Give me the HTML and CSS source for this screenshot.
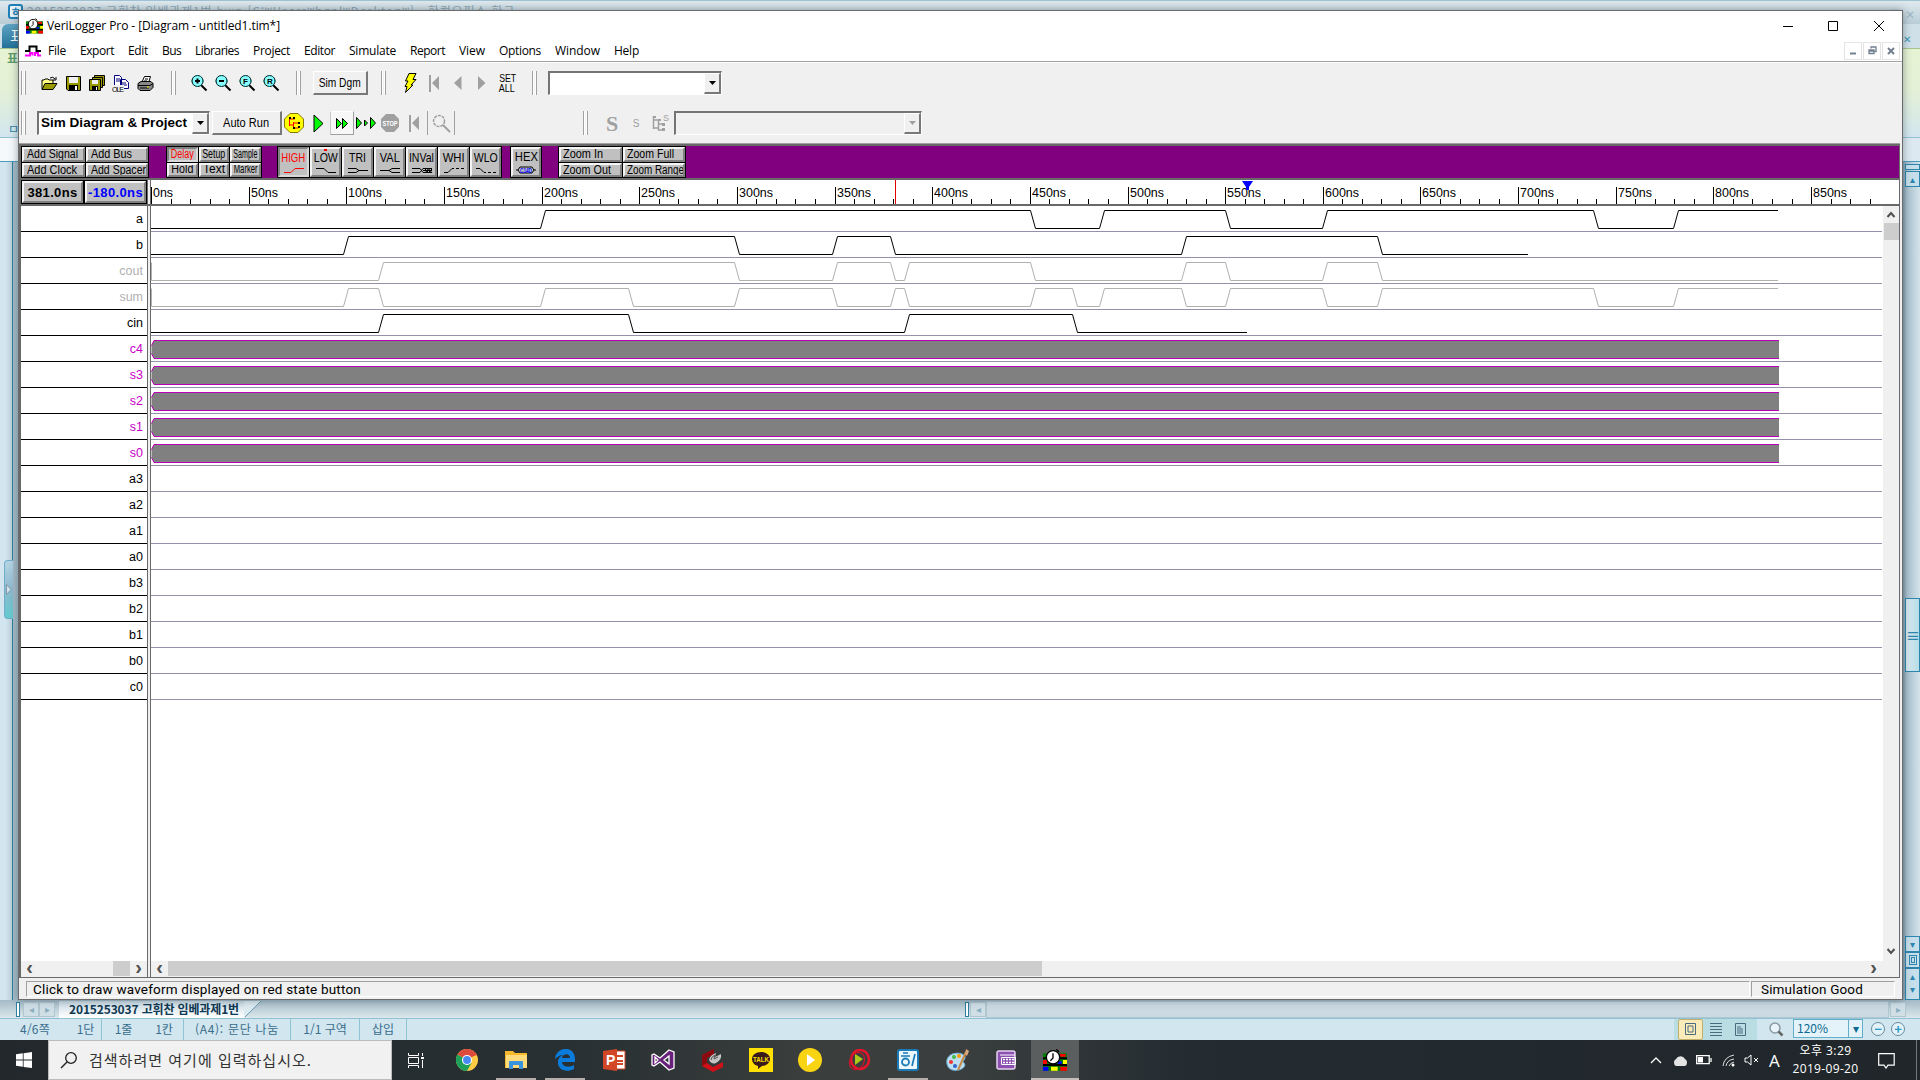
FILE: index.html
```html
<!DOCTYPE html>
<html lang="ko">
<head>
<meta charset="utf-8">
<title>VeriLogger Pro</title>
<link rel="stylesheet" href="styles.css">
</head>
<body>
<svg width="0" height="0" class="defs">
  <symbol id="veri" viewBox="0 0 18 16"><path fill="#008000" d="M0 3h18v13H0z"/><path fill="#000" d="M0 6h18v1.500H0zM0 11h18v1.500H0z"/><path fill="#f00" d="M12 3.500h5v2h-5zM0 8h3v3H0zM13 13h5v3h-5z"/><path fill="#ff0" d="M15 8h3v3h-3zM6 13h5v3H6z"/><path fill="#00f" d="M0 13h4v3H0zM11 9h3v2h-3z"/><circle cx="7.500" cy="6" r="5" fill="#fff" stroke="#000"/><path d="M7.500 3v3.500l-2 2M10 0l2 2" stroke="#000" fill="none"/></symbol>
  <symbol id="mag" viewBox="0 0 18 18"><path d="M11 11l5.500 5.500" stroke="#000" stroke-width="2"/><circle cx="7.500" cy="7" r="5.500" fill="#8ff" stroke="#000"/><circle cx="7.500" cy="7" r="5.500" fill="none" stroke="#088" stroke-dasharray="2 2"/></symbol>
  <symbol id="first" viewBox="0 0 12 18"><path d="M1 1h2v17H1zM11 2v14L4 9z" fill="#a0a0a0"/></symbol>
  <symbol id="win" viewBox="0 0 16 16"><path fill="#fff" d="M0 2.300L6.800 1.300v6.300H0zM7.600 1.200L16 0v7.600H7.600zM0 8.400h6.800v6.400L0 13.800zM7.600 8.400H16V16l-8.400-1.100z"/></symbol>
</svg>

<main class="desktop">
  <section class="hwp">
    <div class="hwp-title"><span class="hwp-logo">ㅎ</span><span class="hwp-name" data-w="488">2015253037 고휘찬 임베과제1번.hwp [C:₩Users₩hgnl₩Desktop₩] - 한컴오피스 한글</span><span class="hwp-x">❐&nbsp; ✕</span></div>
    <div class="hwp-tabs"><span class="hwp-tab">표</span><span class="hwp-close">✕</span></div>
    <div class="hwp-ribbon"><b>표</b><i>ㅁ</i></div>
    <div class="hwp-gap"></div>
    <div class="hwp-doc">
      <div class="edge-left"><span class="edge-handle"><svg width="6" height="11"><path d="M.5.500v10L5 5.500z" fill="#d5e4ea" stroke="#7f9aa8"/></svg></span></div>
      <div class="hwp-scroll">
        <span class="sb split"></span><span class="sb">▴</span>
        <span class="sb-thumb">≡</span><span class="sb down">▾</span><span class="sb"><i></i></span><span class="sb tall">▴<br>▾</span>
      </div>
    </div>
    <div class="hwp-sheets"><span class="grab"></span><span class="nav">◂</span><span class="nav">▸</span><div class="sheet"><b data-w="170">2015253037 고휘찬 임베과제1번</b></div><svg class="slope" width="18" height="17"><path d="M0 17L17 0H0z" fill="#dcebf0"/><path d="M1 16L17 0" stroke="#6b9bb0"/></svg><span class="grab mid"></span><span class="nav">◂</span><span class="fill"></span><span class="nav">▸</span></div>
    <div class="hwp-status">
      <span class="w1" data-w="30">4/6쪽</span><span class="w2 line">1단</span><span class="w3">1줄</span><span class="w4 line">1칸</span><span class="w5 line" data-w="84">(A4): 문단 나눔</span><span class="w6 line">1/1 구역</span><span class="w7 line">삽입</span>
      <div class="views"><span class="v on"><svg width="12" height="13"><path d="M.5.500h10v11H.5zM3 3h5v6H3z" fill="none" stroke="#4a6a80"/></svg></span><span class="v"><svg width="12" height="13"><path d="M0 .5h12M0 3.500h12M0 6.500h12M0 9.500h12M0 12.500h12" stroke="#4a6a80"/></svg></span><span class="v"><svg width="11" height="13"><path d="M.5.500h10v12H.5zM2 4h4M2 6h6M2 8h6M2 10h6" fill="none" stroke="#4a6a80"/></svg></span></div>
      <svg class="lens" width="16" height="16"><circle cx="7" cy="7" r="5" fill="#e9f5fb" stroke="#8a9aa5" stroke-width="1.500"/><path d="M10.500 10.500l4 4" stroke="#666" stroke-width="2.500"/></svg>
      <span class="zoombox"><em>120%</em><i>▾</i></span><span class="round">−</span><span class="round">+</span>
    </div>
  </section>

  <section class="app">
    <header class="title"><svg width="17" height="16"><use href="#veri"/></svg><span data-w="233">VeriLogger Pro - [Diagram - untitled1.tim*]</span>
      <svg class="caption" width="102" height="12"><path d="M1 6.500h10M46.500 1.500h9v9h-9zM92 1l10 10M102 1L92 11" fill="none" stroke="#000"/></svg></header>
    <nav class="menu"><svg width="17" height="12"><path d="M0 6h4.500V1.500h7V6H16" stroke="#000" stroke-width="2" fill="none"/><path d="M0 10.500h5V8h2.500v2.500M10 11V8h3v2.500h3" stroke="#f0f" stroke-width="2" fill="none"/></svg>
      <div class="items"><span data-w="18">File</span><span data-w="34">Export</span><span data-w="20">Edit</span><span data-w="19">Bus</span><span data-w="44">Libraries</span><span data-w="37">Project</span><span data-w="31">Editor</span><span data-w="47">Simulate</span><span data-w="35">Report</span><span data-w="26">View</span><span data-w="42">Options</span><span data-w="45">Window</span><span data-w="25">Help</span></div>
      <div class="mdi-btns"><span><svg width="8" height="9"><path d="M1 7.500h6" stroke="#728090" stroke-width="2"/></svg></span><span><svg width="9" height="9"><path d="M3 2.500V1h5v4.500H6.500M1 4h5v3.500H1zM1 5h5" fill="none" stroke="#728090" stroke-width="1.300"/></svg></span><span><svg width="8" height="8"><path d="M1 1l6 6M7 1L1 7" stroke="#728090" stroke-width="2"/></svg></span></div></nav>

    <div class="toolbars">
      <div class="bar">
        <i class="grip"></i>
        <div class="tools t11">
          <span><svg width="17" height="15"><path d="M1 13V4h2l1-1h3l1 1h4v3" fill="#ff8" stroke="#000"/><path d="M1 13.500L4 7.500h12l-4 6z" fill="#990" stroke="#000"/><path d="M9 2q3-2 5 1m1-2v3h-3" fill="none" stroke="#000"/></svg></span>
          <span><svg width="15" height="15"><path d="M.5.500h14v14H2L.5 13z" fill="#990" stroke="#000"/><path d="M3 1h9v6H3z" fill="#f0f0f0"/><path d="M3 9h9v6H3z" fill="#000"/><path d="M9 10h2v4H9z" fill="#fff"/></svg></span>
          <span><svg width="16" height="16"><path d="M5.500.500h10v10h-10z" fill="#990" stroke="#000"/><path d="M3.500 2.500h10v10h-10z" fill="#990" stroke="#000"/><path d="M.5 4.500h11v11H.5z" fill="#990" stroke="#000"/><path d="M3 5h6v4H3z" fill="#eee"/><path d="M3 11h6v5H3z" fill="#000"/><path d="M7 12h1v3H7z" fill="#fff"/></svg></span>
          <span><svg width="18" height="17"><path d="M2.500.500h5l2 2v8h-7zM8.500 4.500h5l3 3v6h-8z" fill="#fff" stroke="#000080"/><path d="M4 4h4M4 6h4M10 8h4M10 10h5" stroke="#000080"/><path d="M0 10h12v7H0z" fill="#f0f0f0"/><text x="0" y="16.500" font-size="7" textLength="12">OLE</text></svg></span>
          <span><svg width="17" height="15"><path d="M4.500 7l3-6.500h6L11.500 7" fill="#fff" stroke="#000"/><path d="M1 7.500l3-2h10l2 2v4l-3 3H3l-2-2z" fill="#888" stroke="#000"/><path d="M1 9.500h12l3-2M8 3h3M7 5h3M3 12h9" stroke="#000" fill="none"/><path d="M10 11h2" stroke="#ff0"/></svg></span>
        </div>
        <i class="grip g12"></i>
        <div class="tools t11">
          <span><svg width="18" height="18"><use href="#mag"/><path d="M5 7h5M7.500 4.500v5" stroke="#000" stroke-width="2"/></svg></span>
          <span><svg width="18" height="18"><use href="#mag"/><path d="M5 7h5" stroke="#000" stroke-width="2"/></svg></span>
          <span><svg width="18" height="18"><use href="#mag"/><text x="5" y="10" font-size="8" font-weight="bold">F</text></svg></span>
          <span><svg width="18" height="18"><use href="#mag"/><text x="5" y="10" font-size="8" font-weight="bold">R</text></svg></span>
        </div>
        <i class="grip g13"></i>
        <button class="raised simdgm"><em data-w="42">Sim Dgm</em></button>
        <i class="grip g13"></i>
        <div class="tools t12">
          <span><svg width="13" height="20"><path d="M5 .5h7l-3 6h3L7 12h2L1.500 19.500l1.500-6H1L4 8H1.500z" fill="#ff0" stroke="#000"/></svg></span>
          <span><svg width="12" height="18"><use href="#first"/></svg></span>
          <span><svg width="8" height="14"><path d="M7.500 0v14L0 7z" fill="#a0a0a0"/></svg></span>
          <span><svg width="8" height="14"><path d="M0 0v14l7.500-7z" fill="#a0a0a0"/></svg></span>
          <span class="setall"><em data-w="17">SET</em><em data-w="16">ALL</em></span>
        </div>
        <i class="grip g14"></i>
        <div class="combo c1"><span></span><i><svg width="7" height="4"><path d="M0 0h7L3.500 4z"/></svg></i></div>
      </div>
      <div class="bar">
        <i class="grip"></i>
        <div class="combo c2"><span><b data-w="146">Sim Diagram &amp; Project</b></span><i><svg width="7" height="4"><path d="M0 0h7L3.500 4z"/></svg></i></div>
        <button class="raised autorun"><em data-w="46">Auto Run</em></button>
        <div class="tools">
          <span><svg width="20" height="20"><path d="M6 .5h8l5.500 5.500v8L14 19.500H6L.5 14V6z" fill="#ff0" stroke="#870"/><path d="M5.500 4v9M5.500 6h5M5.500 12h4M9.500 9v6h5M10 10h5" stroke="#f00" fill="none"/><path d="M9 4h2v2H9zM5 4h2v2H5zM14 9h2v2h-2zM14 13h2v2h-2zM9 14h2v2H9z" fill="#000"/></svg></span>
          <span><svg width="11" height="19"><path d="M1 1v17l9-8.500z" fill="#0f0" stroke="#000"/></svg></span>
          <span class="boxed"><svg width="12" height="11"><path d="M.5.500v10l5-5zM6.500.500v10l5-5z" fill="#0f0" stroke="#000"/></svg></span>
          <span><svg width="21" height="12"><path d="M.5.500v11l5-5.500zM8.500 3v6l3-3zM14.500.500v11l5-5.500z" fill="#0f0" stroke="#000"/></svg></span>
          <span><svg width="18" height="18"><path d="M5 0h8l5 5v8l-5 5H5l-5-5V5z" fill="#a0a0a0"/><text x="1.500" y="11.500" font-size="7" font-weight="bold" fill="#fff" textLength="15" lengthAdjust="spacingAndGlyphs">STOP</text></svg></span>
          <span><svg width="12" height="18"><use href="#first"/></svg></span>
        </div>
        <i class="sep"></i>
        <div class="tools"><span><svg width="19" height="19"><circle cx="7" cy="7" r="5.500" fill="none" stroke="#a0a0a0" stroke-width="1.500" stroke-dasharray="3 1"/><path d="M11 11l7 7" stroke="#a0a0a0" stroke-width="2"/></svg></span></div>
        <i class="sep"></i>
        <i class="grip g21"></i>
        <div class="tools t12"><span class="bigs">S</span><span class="smalls">S</span><span><svg width="17" height="18"><path d="M1.500 2v13M1.500 6h5M1.500 14h5M6.500 6v10h5M7 10h4" stroke="#a0a0a0" fill="none" stroke-width="1.500"/><path d="M1 2h3v2H1zM6 5h3v2H6zM10 9h3v3h-3zM10 14h3v3h-3z" fill="#a0a0a0"/><text x="11" y="7" font-size="9" fill="#a0a0a0">S</text></svg></span></div>
        <div class="combo c3"><span></span><i><svg width="7" height="4"><path d="M0 0h7L3.500 4z" fill="#a0a0a0"/></svg></i></div>
      </div>
    </div>

    <div class="mdi">
      <div class="strip">
        <div class="grid two"><button><em data-w="51">Add Signal</em></button><button><em data-w="41">Add Bus</em></button><button><em data-w="50">Add Clock</em></button><button><em data-w="55">Add Spacer</em></button></div>
        <div class="grid three"><button class="red down"><em data-w="23">Delay</em></button><button><em data-w="23">Setup</em></button><button><em data-w="24">Sample</em></button><button><em data-w="22">Hold</em></button><button><em data-w="22">Text</em></button><button><em data-w="24">Marker</em></button></div>
        <div class="grid states">
          <button class="red down"><em data-w="24">HIGH</em><svg width="22" height="7"><path d="M1 5.500h7l4-4h9"/></svg></button>
          <button class="mark"><em data-w="24">LOW</em><svg width="22" height="7"><path d="M1 1.500h8l4 4h8"/></svg></button>
          <button><em data-w="17">TRI</em><svg width="22" height="7"><path d="M1 1.500h8l3 2h9M1 5.500h8l3-2"/></svg></button>
          <button><em data-w="20">VAL</em><svg width="22" height="7"><path d="M1 3.500h9l3-2h8M10 3.500l3 2h8"/></svg></button>
          <button><em data-w="25">INVal</em><svg width="22" height="7"><path d="M1 1.500h8l3 4h9M1 5.500h8l3-4h9M12 3.500h9M13 1l5 5M17 1l4 5M18 1l-4 5M21 2l-4 4"/></svg></button>
          <button><em data-w="22">WHI</em><svg width="22" height="7"><path d="M1 5.500h4l4-4h2M13 1.500h3M18 1.500h3"/></svg></button>
          <button><em data-w="24">WLO</em><svg width="22" height="7"><path d="M1 1.500h4l4 4h2M13 5.500h3M18 5.500h3"/></svg></button>
        </div>
        <div class="grid hex"><button><em data-w="23">HEX</em><svg width="22" height="8"><path d="M1 4h2l2-3h12l2 3h2M3 4l2 3h12l2-3"/><text x="5" y="6.500" font-size="6.500" font-weight="bold" fill="#00f" textLength="12" lengthAdjust="spacingAndGlyphs">C14D</text></svg></button></div>
        <div class="grid two zooms"><button><em data-w="40">Zoom In</em></button><button><em data-w="47">Zoom Full</em></button><button><em data-w="48">Zoom Out</em></button><button><em data-w="57">Zoom Range</em></button></div>
      </div>
      <div class="timebar">
        <div class="times"><button><b data-w="50">381.0ns</b></button><button class="blue"><b data-w="55">-180.0ns</b></button></div>
        <i class="splitter"></i>
        <svg id="ruler" width="1748" height="24"></svg>
      </div>
      <div class="panes">
        <div class="left"><div id="names"></div><div class="hscroll"><i class="arr">‹</i><i class="thumb"></i><i class="arr">›</i></div></div>
        <i class="splitter"></i>
        <div class="right">
          <div class="wavearea"><svg id="waves" width="1731" height="755"></svg>
            <div class="vscroll"><svg width="10" height="7"><path d="M1.500 6L5 2l3.500 4" /></svg><i class="vthumb"></i><svg class="dn" width="10" height="7"><path d="M1.500 1L5 5l3.500-4"/></svg></div></div>
          <div class="hscroll"><i class="arr">‹</i><i class="thumb"></i><i class="arr">›</i></div>
        </div>
      </div>
    </div>
    <footer class="status"><div class="s1"><span data-w="328">Click to draw waveform displayed on red state button</span></div><div class="s2"><span data-w="102">Simulation Good</span></div></footer>
  </section>
</main>

<footer class="taskbar">
  <span class="start"><svg width="16" height="16"><use href="#win"/></svg></span>
  <div class="search"><svg width="18" height="18"><circle cx="11" cy="7" r="5.300" fill="none" stroke="#222" stroke-width="1.300"/><path d="M7 11l-6 6" stroke="#222" stroke-width="1.500"/></svg><span data-w="223">검색하려면 여기에 입력하십시오.</span></div>
  <div class="apps">
    <span class="tv"><svg width="17" height="15"><path d="M.5 0v2.500h10V0M.5 15v-2.500h10V15M.5 4.500h10v6H.5zM14.500 0v3M14.500 7v8" fill="none" stroke="#fff"/><path d="M13 4h3v2h-3z" fill="#fff"/></svg></span>
    <span><svg width="22" height="22" viewBox="0 0 24 24"><circle cx="12" cy="12" r="12" fill="#fc4"/><path d="M12 12L1.600 6A12 12 0 0 1 22.400 6z" fill="#dd4b3e"/><path d="M12 12L1.600 6A12 12 0 0 0 12 24l5-9z" fill="#1fa05a"/><path d="M12 6h10.400" stroke="#dd4b3e" stroke-width="2"/><circle cx="12" cy="12" r="5.500" fill="#fff"/><circle cx="12" cy="12" r="4.300" fill="#4889f4"/></svg></span>
    <span class="open"><svg width="22" height="18"><path d="M0 0h8l2 2h12v15H0z" fill="#f7b92c"/><path d="M1 4h21v13H1z" fill="#fedb7b"/><path d="M4 18v-7q0-1 1-1h12q1 0 1 1v7h-4v-4H8v4z" fill="#3a93dc"/></svg></span>
    <span class="open"><svg width="21" height="22" viewBox="0 0 21 22"><path d="M0 10C1-3 20-4 20 10v3H7c0 5 8 6 12 3v4C11 24 2 21 3 12c0-3 3-5 5-6Q4 6 0 10zM7 9h8c0-5-7-5-8 0z" fill="#0b7bdb"/></svg></span>
    <span><svg width="23" height="22"><path d="M10 2h12v18H10z" fill="#fff" stroke="#d24726"/><path d="M14 7h6M14 12h6M14 15h6" stroke="#d24726" stroke-width="2"/><path d="M0 2l14-2v22L0 20z" fill="#d24726"/><text x="3" y="16" font-size="14" font-weight="bold" fill="#fff">P</text></svg></span>
    <span><svg width="24" height="22"><path d="M18 1l5 2v16l-5 2-9-8-6 4-2-1V6l2-1 6 4zM4 8v6l3-3zM18 7l-5 4 5 4z" fill="#68217a" stroke="#fff" stroke-width="1.300" fill-rule="evenodd"/></svg></span>
    <span><svg width="23" height="23"><path d="M13 0L1 6v11l11 6 10-5v-5l-10 5-6-4V9l7-4z" fill="#d01018"/><path d="M13 0L1 6v11l5-3V9l7-4z" fill="#8a0a10"/><path d="M8 11q1-5 7-7l-1 4 6-3q1 6-5 9-4 2-7-3z" fill="#c4c4c4"/><path d="M10 11q0-3 4-5l-1 4 4-2" stroke="#555" fill="none"/></svg></span>
    <span><svg width="24" height="24"><path d="M0 0h24v24H0z" fill="#ffe000"/><path d="M12 4c5 0 9 3 9 7s-4 7-8 7l-4 3v-3c-4-1-6-4-6-7 0-4 4-7 9-7z" fill="#391b1b"/><text x="4" y="14" font-size="7.500" font-weight="bold" fill="#ffe000" textLength="16" lengthAdjust="spacingAndGlyphs">TALK</text></svg></span>
    <span><svg width="24" height="24"><circle cx="12" cy="12" r="12" fill="#f8d412"/><path d="M9 6v12l8-6z" fill="#fff"/></svg></span>
    <span><svg width="23" height="22"><ellipse cx="12" cy="10.500" rx="9" ry="9.500" fill="none" stroke="#e8142c" stroke-width="2.500"/><ellipse cx="9" cy="12" rx="7" ry="9" fill="none" stroke="#c8142c" stroke-width="1.300" transform="rotate(30 9 12)"/><path d="M7 5v11l8-6z" fill="#b0c81a"/></svg></span>
    <span class="open"><svg width="22" height="22"><rect x="1" y="1" width="20" height="20" rx="2" fill="#eaf7fd" stroke="#1b7ab8" stroke-width="2"/><path d="M6 4h5M4 7h9M18 5l-3 12" stroke="#1b7ab8" stroke-width="1.700"/><circle cx="8.500" cy="13" r="3.500" fill="none" stroke="#1b7ab8" stroke-width="1.800"/></svg></span>
    <span><svg width="23" height="23"><path d="M1 15C-1 7 8 2 16 5q5 2 2 6c-3 3 3 3 0 7s-15 6-17-3z" fill="#bcdff2" stroke="#6bb0d6"/><circle cx="5" cy="13" r="2" fill="#e33"/><circle cx="8" cy="8" r="2" fill="#4b4"/><circle cx="13" cy="7" r="2" fill="#f90"/><circle cx="9" cy="17" r="2" fill="#36c"/><path d="M12 21L20 3" stroke="#c88b4a" stroke-width="2"/><path d="M19 5l1-5 3 2-2 5z" fill="#d9a87c"/></svg></span>
    <span><svg width="20" height="20"><rect x="1" y="1" width="18" height="18" rx="2" fill="#8b50b0" stroke="#e6d3f2" stroke-width="1.500"/><path d="M4 5h15" stroke="#fff"/><path d="M5.500 7.500h14v7h-14z" fill="none" stroke="#fff"/><path d="M7 9.500h11M7 12.500h11" stroke="#fff" stroke-width="1.300" stroke-dasharray="2 1"/></svg></span>
    <span class="open active"><svg width="24" height="22"><use href="#veri"/></svg></span>
  </div>
  <div class="tray">
    <svg class="i1" width="12" height="7"><path d="M1 6l5-5 5 5" fill="none" stroke="#fff" stroke-width="1.300"/></svg>
    <svg class="i2" width="17" height="11"><path d="M4 11a4 4 0 0 1 0-7 5 5 0 0 1 9 0 4 4 0 0 1 0 7z" fill="#e4e4e4"/></svg>
    <svg class="i3" width="16" height="10"><path d="M.7.700h12.500v8H.7zM15 3v4" fill="none" stroke="#fff" stroke-width="1.300"/><path d="M2 2h5v5.500H2z" fill="#fff"/></svg>
    <svg class="i4" width="14" height="13"><path d="M1 12Q2 3 12 1M4 12q1-6 8-7M7 12q1-3 5-4" fill="none" stroke="#ddd"/><circle cx="11" cy="11" r="1.500" fill="#fff"/></svg>
    <svg class="i5" width="15" height="12"><path d="M1 4h2.500L7 1v10L3.500 8H1zM10 4l4 4M14 4l-4 4" fill="none" stroke="#fff"/></svg>
    <span class="ime">A</span>
    <div class="clock"><span data-w="52">오후 3:29</span><span data-w="66">2019-09-20</span></div>
    <svg class="i6" width="17" height="16"><path d="M.7.700h15.500v11.500H10L8 15l-2-2.800H.7z" fill="none" stroke="#fff" stroke-width="1.200"/></svg>
    <i class="peek"></i>
  </div>
</footer>
<script src="script.js"></script>
</body>
</html>
```
FILE: styles.css
```css
* { box-sizing: border-box; }
body { margin: 0; width: 1920px; height: 1080px; overflow: hidden; display: flex; flex-direction: column; font: 12px "Liberation Sans", "Noto Sans CJK KR", sans-serif; color: #000; }
i, em { font-style: normal; }
svg { display: block; flex: none; }
button { font: inherit; padding: 0; border: 0; color: inherit; border-radius: 0; }
[data-w] { white-space: nowrap; }
em[data-w] { display: inline-block; }
.defs { position: absolute; }
.desktop { position: relative; height: 1040px; }

/* word processor behind */
.hwp { position: absolute; inset: 0; display: flex; flex-direction: column; background: #d3e6f0; font-family: "Noto Sans CJK KR", sans-serif; color: #3a6d8c; }
.hwp-title { height: 24px; border-top: 1px solid #9fc3d2; background: linear-gradient(#dfe9ee, #b9cdd6); display: flex; align-items: flex-start; padding: 2px 5px 0 8px; color: #8da8b5; font-size: 12px; line-height: 16px; overflow: hidden; }
.hwp-logo { width: 15px; height: 15px; border: 2px solid #1f7fb6; border-radius: 3px; background: #e8f6fb; color: #1f7fb6; font-size: 11px; line-height: 11px; text-align: center; font-weight: bold; margin: 1px 4px 0 0; }
.hwp-x { margin-left: auto; line-height: 22px; color: #9db9c4; }
.hwp-tabs { height: 24px; background: #cfe0e8; display: flex; justify-content: space-between; }
.hwp-tab { width: 60px; border-radius: 6px 0 0 0; margin-left: 2px; padding-left: 8px; background: linear-gradient(#5fa3c3, #237199); color: #fff; font-size: 15px; }
.hwp-close { color: #3b93b3; padding-right: 9px; line-height: 30px; font-size: 10px; }
.hwp-ribbon { height: 91px; border-top: 1px solid #a5c58b; border-bottom: 1px solid #8fc3d4; background: linear-gradient(#e6f3d3, #e4f1d6 45%, #d3e6ef); padding: 0 7px; display: flex; flex-direction: column; justify-content: space-between; color: #5d9b6a; font-size: 12px; }
.hwp-ribbon i { color: #2e7fa8; padding-left: 1px; }
.hwp-gap { height: 25px; background: linear-gradient(90deg, #f5f9fb, #dce9f0); border-bottom: 1px solid #4c9dbb; }
.hwp-doc { flex: 1; display: flex; justify-content: space-between; }
.edge-left { width: 18px; background: linear-gradient(90deg, #d3e6f0 0 5px, #bfd2dc 12px, #2d7f9c 12px 13px, #a5bcc8 13px); display: flex; align-items: flex-start; padding: 398px 0 0 4px; }
.edge-handle { width: 9px; height: 59px; border: 1px solid #70aecb; border-right: 0; border-radius: 4px 0 0 4px; background: linear-gradient(#b6d5e4, #8fb9ce 50%, #63cbd0); display: grid; place-items: center; }
.hwp-scroll { width: 17px; background: linear-gradient(90deg, #899fac, #a9c1ce 4px, #d4e3ea); display: flex; flex-direction: column; padding: 2px 0 0 2px; text-align: center; font-size: 10px; line-height: 13px; color: #2e86ae; }
.sb { height: 16px; border: 1px solid #2e86ae; background: #c6dfea; flex: none; }
.sb.split { height: 6px; margin-bottom: 1px; }
.sb.down { margin-top: 264px; }
.sb i { display: block; width: 8px; height: 10px; margin: 2px auto; border: 1px solid #2e86ae; box-shadow: inset 0 0 0 1px #c6dfea, inset 0 0 0 2px #2e86ae; }
.sb.tall { height: 32px; }
.sb-thumb { height: 74px; margin-top: 411px; border: 1px solid #2e86ae; background: linear-gradient(90deg, #dcebf1, #b5dce6); line-height: 72px; font-size: 14px; font-weight: bold; }
.hwp-sheets { height: 18px; background: linear-gradient(#a4bac6, #dbe7ec); display: flex; padding: 1px 14px 0 16px; }
.grab { width: 4px; height: 15px; border: 1px solid #2e7f9f; background: #fff; margin: 1px 3px 0 0; flex: none; }
.grab.mid { margin-left: 703px; margin-right: 1px; }
.nav { width: 16px; height: 15px; margin: 1px 0 0; border: 1px solid #b0c6d0; color: #8bafc0; background: #d0dfe6; line-height: 11px; text-align: center; font-size: 10px; flex: none; }
.sheet { width: 185px; margin-left: 4px; background: linear-gradient(#c9dae3, #fff); padding-left: 10px; font-size: 12px; line-height: 15px; color: #0f3852; height: 17px; }
.fill { flex: 1; margin-right: 1px; border: 1px solid #b0c6d0; background: #cbdae2; }
.hwp-status { height: 22px; border-top: 1px solid #8fc3d4; background: #d1e6ef; display: flex; align-items: stretch; line-height: 20px; font-size: 12px; text-align: center; }
.line { border-right: 1px solid #8fc3d4; }
.w1 { width: 70px; text-align: left; padding-left: 20px; } .w2 { width: 32px; } .w3 { width: 43px; } .w4 { width: 39px; }
.w5 { width: 107px; } .w6 { width: 69px; } .w7 { width: 47px; }
.views { display: flex; margin-left: 1267px; background: #b9dde3; width: 83px; padding: 0 4px; }
.v { width: 25px; display: grid; place-items: center; }
.v.on { background: #faecb8; border: 1px solid #c2ae6d; border-radius: 2px; }
.lens { margin: 2px 9px 0 11px; }
.zoombox { width: 70px; border: 1px solid #63aecb; background: #e4f3f9; height: 19px; display: flex; justify-content: space-between; line-height: 16px; padding-left: 3px; color: #0a6a92; }
.zoombox i { width: 14px; border-left: 1px solid #63aecb; }
.round { width: 14px; height: 14px; border: 1px solid #678b9c; border-radius: 50%; margin: 3px 0 0 8px; line-height: 11px; color: #2b9bc6; font-weight: bold; font-size: 13px; background: #e3f2f8; }
.round + .round { margin-left: 6px; }

/* simulator window */
.app { position: absolute; left: 18px; top: 10px; width: 1885px; height: 990px; border: 1px solid #6b6b6b; background: #f0f0f0; box-shadow: 0 0 8px rgba(40,60,75,.45); display: flex; flex-direction: column; }
.title { height: 29px; background: #fff; display: flex; align-items: center; padding: 0 18px 0 7px; font: 12px "Open Sans", sans-serif; }
.title > span { margin-left: 4px; }
.caption { margin-left: auto; }
.menu { height: 22px; background: #fff; border-bottom: 1px solid #a0a0a0; display: flex; align-items: center; padding: 0 2px 0 6px; font: 12px "Open Sans", sans-serif; }
.items { margin-left: 6px; display: flex; gap: 14px; }
.mdi-btns { margin-left: auto; display: flex; gap: 1px; }
.mdi-btns span { width: 18px; height: 18px; border: 1px solid #e4e4e4; display: grid; place-items: center; }
.toolbars { height: 82px; border-top: 1px solid #fff; }
.bar { height: 40px; display: flex; align-items: center; padding-left: 2px; }
.grip { width: 5px; height: 24px; border: solid #a0a0a0; border-width: 0 1px; box-shadow: inset 1px 0 #fff, inset -1px 0 #fff; flex: none; }
.g12, .g14 { margin-left: 14px; } .g13 { margin-left: 13px; } .g21 { margin-left: 127px; }
.tools { display: flex; }
.tools > span { width: 24px; height: 24px; display: grid; place-items: center; }
.t11 { margin-left: 11px; } .t12 { margin-left: 12px; }
.tools .boxed { border: 1px solid #a0a0a0; border-top-color: #fff; border-left-color: #c8c8c8; background: #f7f7f7; }
.raised { height: 24px; background: #f0f0f0; border: solid; border-width: 1px 2px 2px 1px; border-color: #fff #787878 #787878 #fff; font-size: 12px; display: grid; place-content: center; }
.simdgm { width: 55px; margin-left: 12px; }
.autorun { width: 70px; margin-left: 2px; }
.tools .setall { place-items: start; align-content: center; padding-left: 3px; line-height: 10px; font-size: 11px; }
.combo { height: 24px; border: solid; border-width: 2px 1px 1px 2px; border-color: #747474 #fff #fff #747474; background: #fff; display: flex; justify-content: space-between; align-items: stretch; }
.combo span { padding: 2px 0 0 2px; font-size: 13.5px; }
.combo i { width: 17px; background: #f0f0f0; border: solid; border-width: 1px 2px 2px 1px; border-color: #fff #787878 #787878 #fff; display: grid; place-items: center; }
.c1 { margin-left: 11px; width: 174px; } .c2 { margin-left: 11px; width: 173px; }
.c3 { margin-left: 2px; width: 248px; background: #f0f0f0; }
.sep { width: 1px; height: 24px; background: #a0a0a0; margin: 0 1px; }
.bigs { font: bold 22px "Liberation Serif", serif; color: #a0a0a0; }
.smalls { font-size: 10px; color: #a0a0a0; }

.mdi { flex: 1; margin-right: 2px; border: solid #696969; border-width: 2px 1px 1px 2px; display: flex; flex-direction: column; box-shadow: 0 -1px #a0a0a0; }
.strip { height: 34px; background: #800080; border-bottom: 2px solid #696969; display: flex; }
.grid { background: #000; display: grid; padding: 1px; gap: 1px; height: 32px; }
.grid button, .times button { background: #c0c0c0; border: solid; border-width: 2px; border-color: #f4f4f4 #808080 #808080 #f4f4f4; overflow: hidden; line-height: 11px; text-align: center; }
.two { width: 128px; grid-template-columns: 1fr 1fr; }
.two button { text-align: left; padding-left: 3px; }
.two em { transform-origin: 0 50%; }
.three { width: 96px; grid-template-columns: repeat(3, 1fr); margin-left: 17px; }
.three button { display: grid; place-content: center; }
.states { width: 225px; grid-template-columns: repeat(7, 1fr); margin-left: 15px; }
.hex { width: 32px; margin-left: 8px; }
.zooms { margin-left: 16px; }
.zooms button { padding-left: 2px; }
.states button, .hex button { display: flex; flex-direction: column; align-items: center; justify-content: flex-end; padding-bottom: 1px; gap: 3px; font-size: 13px; line-height: 12px; }
.states path, .hex path { fill: none; stroke: #000; }
.grid .red { color: #f00; } .states .red path { stroke: #f00; }
.grid .down { border-color: #808080 #d8d8d8 #d8d8d8 #808080; }
.grid .mark { background: linear-gradient(#f00, #f00) 50% 0 / 3px 2px no-repeat #c0c0c0; }
.timebar { height: 26px; border-bottom: 2px solid #696969; background: #fff; display: flex; }
.times { width: 126px; background: #000; display: grid; grid-template-columns: 1fr 61px; gap: 2px; padding: 1px; font-size: 13px; }
.times .blue { color: #00f; }
.splitter { width: 4px; background: #f0f0f0; border: solid #696969; border-width: 0 1px; flex: none; }
.panes { flex: 1; display: flex; background: #fff; }
.left { width: 126px; display: flex; flex-direction: column; }
#names { height: 755px; }
.name { height: 26px; border-bottom: 1px solid #000; text-align: right; padding: 6px 4px 0 0; line-height: 15px; font-size: 12.5px; }
.name.out { color: #b0b0b0; } .name.bus { color: #c800c8; }
.right { flex: 1; display: flex; flex-direction: column; }
.wavearea { display: flex; height: 755px; justify-content: space-between; }
.vscroll { width: 16px; background: #f0f0f0; display: flex; flex-direction: column; align-items: center; padding-top: 5px; }
.vscroll path { fill: none; stroke: #505050; stroke-width: 2; }
.vthumb { width: 15px; height: 17px; background: #cdcdcd; margin-top: 5px; }
.vscroll .dn { margin-top: auto; margin-bottom: 6px; }
.hscroll { height: 16px; background: #f0f0f0; display: flex; }
.hscroll .arr { width: 17px; text-align: center; font: bold 20px/12px "Liberation Sans", sans-serif; color: #505050; }
.hscroll .thumb { height: 15px; background: #cdcdcd; }
.left .thumb { width: 17px; margin-left: 75px; }
.right .thumb { width: 874px; margin-right: 823px; }
.status { height: 21px; padding: 3px 7px 2px 7px; display: flex; gap: 1px; font: 13.5px/14px Roboto, sans-serif; }
.s1, .s2 { border: 1px solid; border-color: #a0a0a0 #fff #fff #a0a0a0; padding-left: 6px; }
.s1 { flex: 1; } .s2 { width: 144px; padding-left: 9px; }
#ruler text { font-size: 12.5px; }

/* taskbar */
.taskbar { height: 40px; display: flex; background: linear-gradient(90deg, #22282b 0%, #283033 30%, #3a3e3c 42%, #3a3e3e 50%, #242c31 62%, #20262a 100%); color: #fff; }
.start { width: 48px; display: grid; place-items: center; }
.search { width: 344px; border: 1px solid #bcbcbc; background: #f1f1f1; color: #333; display: flex; align-items: center; padding-left: 11px; gap: 11px; font: 15px "Noto Sans CJK KR", sans-serif; }
.search span { margin-top: -2px; }
.apps { display: flex; gap: 1px; }
.apps span { width: 48px; height: 40px; display: grid; place-items: center; }
.apps .tv { margin-right: 2px; }
.apps .open { background: linear-gradient(#b5aeaa, #b5aeaa) 50% 100% / 40px 2px no-repeat; }
.apps .active { background: linear-gradient(#c5beba, #c5beba) 50% 100% / 48px 2px no-repeat, #5a5e5e; }
.tray { margin-left: auto; display: flex; align-items: center; }
.i1 { margin-right: 10px; } .i2 { margin-right: 7px; } .i3 { margin-right: 10px; } .i4 { margin-right: 8px; } .i5 { margin-right: 10px; }
.ime { font: 17px "Open Sans", sans-serif; width: 14px; margin-right: 9px; }
.clock { width: 67px; display: flex; flex-direction: column; align-items: center; font: 12px/18px "Open Sans", "Noto Sans CJK KR", sans-serif; margin-right: 19px; }
.peek { margin-left: 21px; width: 4px; height: 40px; border-left: 1px solid #777; }
.i6 { margin-top: 2px; }
```
FILE: script.js
```js
// Fit each fixed-width label: condense toolbar captions, respace other text
document.querySelectorAll('[data-w]').forEach(function (el) {
  var r = document.createRange();
  r.selectNodeContents(el);
  var natural = r.getBoundingClientRect().width;
  var n = Array.from(el.textContent).length;
  if (el.tagName === 'EM') el.style.transform = 'scaleX(' + (+el.dataset.w / natural) + ')';
  else el.style.letterSpacing = ((+el.dataset.w - natural) / n) + 'px';
});

var LEFT = 151, ROW = 26, PX_PER_NS = 1.953;

// Time ruler
var ruler = '';
for (var t = 0; t <= 880; t += 10) {
  var x = Math.round(t * PX_PER_NS);
  var major = t % 50 === 0;
  ruler += '<rect x="' + x + '" y="' + (major ? 7 : 19) + '" width="1" height="' + (major ? 17 : 5) + '"/>';
  if (major) ruler += '<text x="' + (x + 2) + '" y="17" textLength="' + (t === 0 ? 20 : t < 100 ? 27 : 34) + '" lengthAdjust="spacingAndGlyphs">' + t + 'ns</text>';
}
ruler += '<rect x="744" y="0" width="1" height="24" fill="#e00000"/><path d="M1091 1h11l-4 6v3h-3v-3z" fill="#00f"/>';
document.getElementById('ruler').innerHTML = ruler;

// Signals: every edge toggles the level, starting low
var signals = [
  { n: 'a', e: [540, 1030, 1099, 1225, 1322, 1593, 1673], end: 1778 },
  { n: 'b', e: [343, 734, 832, 890, 1181, 1377], end: 1528 },
  { n: 'cout', k: 'out', e: [378, 734, 832, 890, 904, 1030, 1181, 1225, 1322, 1377], end: 1778 },
  { n: 'sum', k: 'out', e: [343, 378, 540, 628, 734, 832, 890, 904, 1030, 1072, 1099, 1181, 1225, 1322, 1377, 1593, 1673], end: 1778 },
  { n: 'cin', e: [378, 628, 904, 1072], end: 1247 }
];
['c4', 's3', 's2', 's1', 's0'].forEach(function (n) { signals.push({ n: n, k: 'bus' }); });
['a3', 'a2', 'a1', 'a0', 'b3', 'b2', 'b1', 'b0', 'c0'].forEach(function (n) { signals.push({ n: n }); });

var waves = '', names = '';
signals.forEach(function (s, i) {
  var hi = i * ROW + 4.5, lo = hi + 18;
  names += '<div class="name ' + (s.k || '') + '">' + s.n + '</div>';
  waves += '<rect x="0" y="' + (i * ROW + 25) + '" width="1731" height="1" fill="#9492aa"/>';
  if (s.k === 'bus') {
    waves += '<path d="M1628 ' + hi + 'H3L.5 ' + (hi + 5) + 'V' + (hi + 13) + 'L3 ' + lo + 'H1628z" fill="#808080"/>' +
      '<path d="M1628 ' + hi + 'H3L.5 ' + (hi + 5) + 'M.5 ' + (hi + 13) + 'L3 ' + lo + 'H1628" fill="none" stroke="#b800b8"/>';
  } else if (s.e) {
    var d = (s.k ? 'M.5 ' + hi + 'V' : 'M0 ') + lo, y = lo;
    s.e.forEach(function (e) {
      d += 'L' + (e - LEFT + .5) + ' ' + y;
      y = y === lo ? hi : lo;
      d += 'L' + (e - LEFT + 5.5) + ' ' + y;
    });
    d += 'L' + (s.end - LEFT) + ' ' + y;
    waves += '<path d="' + d + '" fill="none" stroke="' + (s.k ? '#b0b0b0' : '#000') + '"/>';
  }
});
document.getElementById('waves').innerHTML = waves;
document.getElementById('names').innerHTML = names;
```
